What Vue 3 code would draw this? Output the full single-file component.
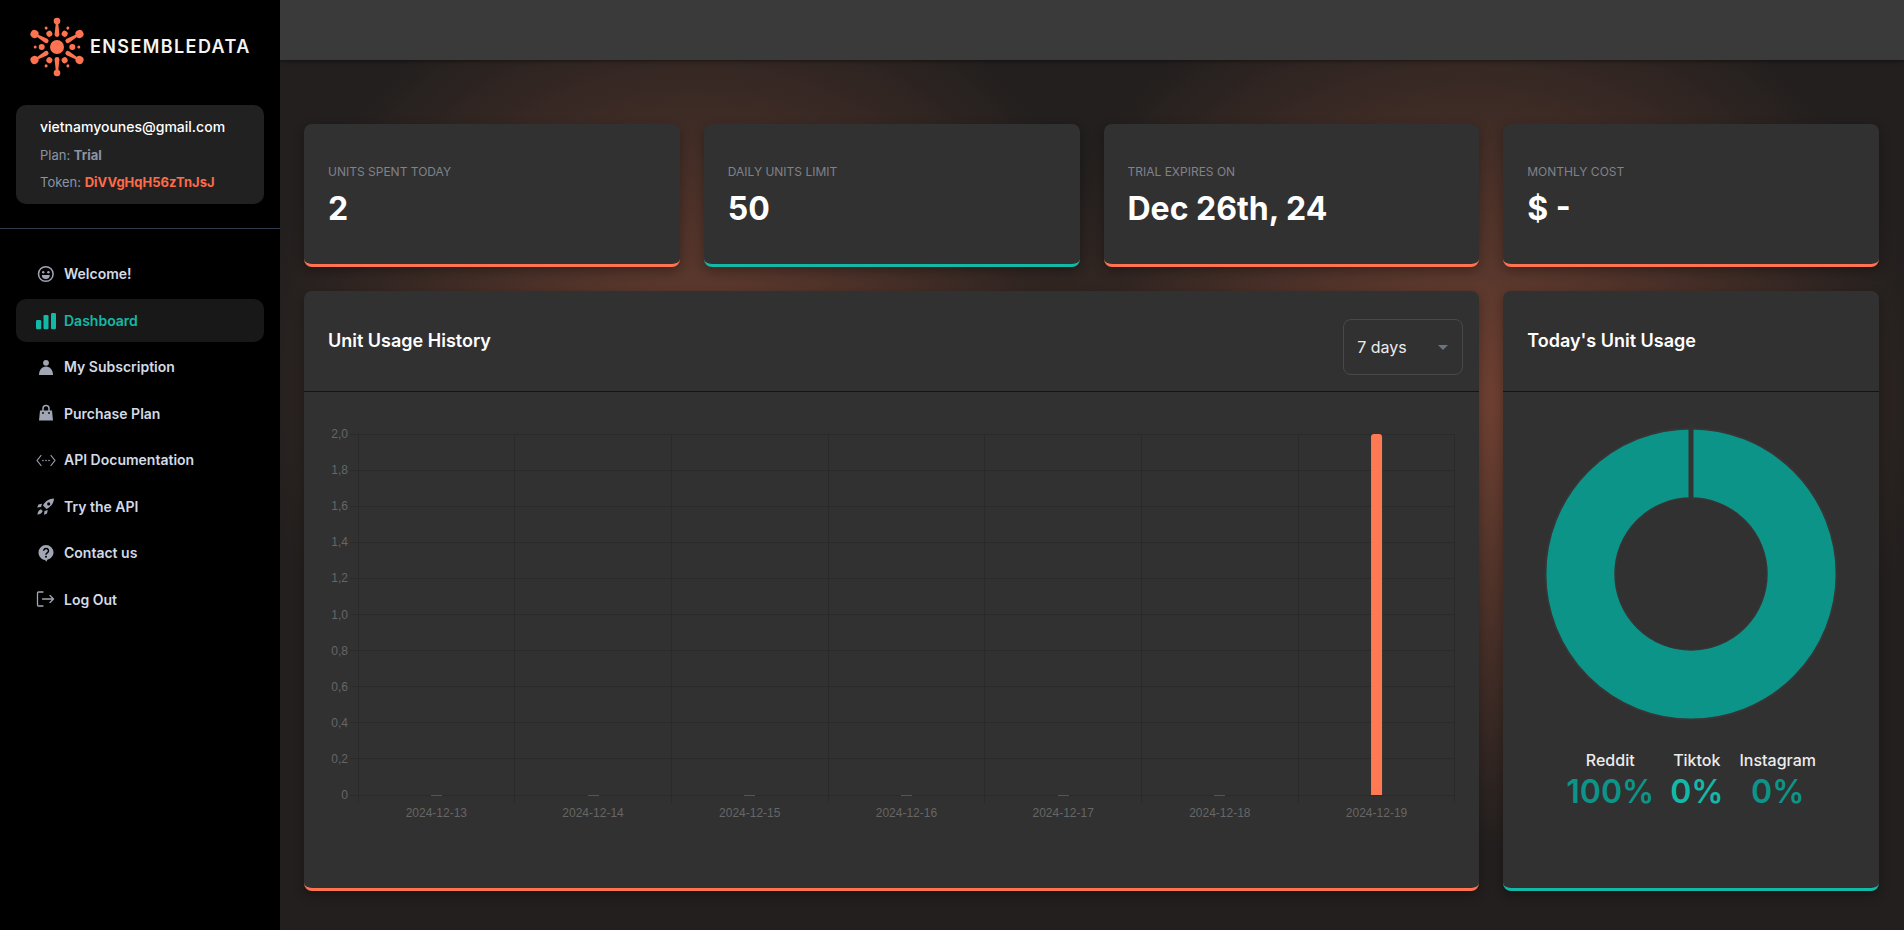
<script setup>
const stats = [
  { label: "UNITS SPENT TODAY", value: "2", accent: "orange" },
  { label: "DAILY UNITS LIMIT", value: "50", accent: "teal" },
  { label: "TRIAL EXPIRES ON", value: "Dec 26th, 24", accent: "orange" },
  { label: "MONTHLY COST", value: "$ -", accent: "orange" },
];

const navItems = ["Welcome!", "Dashboard", "My Subscription", "Purchase Plan", "API Documentation", "Try the API", "Contact us", "Log Out"];

const yLabels = ["2,0", "1,8", "1,6", "1,4", "1,2", "1,0", "0,8", "0,6", "0,4", "0,2", "0"];
const days = ["2024-12-13", "2024-12-14", "2024-12-15", "2024-12-16", "2024-12-17", "2024-12-18", "2024-12-19"];

const chartW = 1175;
const plotL = 54;
const plotT = 42;
const stepX = 156.7;
const stepY = 36.1;
const plotB = plotT + stepY * 10;

const legend = [
  { name: "Reddit", value: "100%" },
  { name: "Tiktok", value: "0%", bright: true },
  { name: "Instagram", value: "0%" },
];

// logo: six long spokes, six mid circles and six small dots between them
const spokes = [0, 60, 120, 180, 240, 300];
const between = [30, 90, 150, 210, 270, 330];
</script>

<template>
  <div class="page">
    <aside class="sidebar">
      <div class="brand">
        <svg class="brand-mark" viewBox="-30 -30 60 60" aria-hidden="true">
          <g fill="#ff7350">
            <circle r="7" />
            <g v-for="a in spokes" :key="a" :transform="`rotate(${a})`">
              <path d="M-1 -26L1 -26L2.4 -12.5a2.4 2.4 0 0 1-4.8 0z" />
              <circle cy="-26" :r="a % 180 === 0 ? 3.3 : 4" />
            </g>
            <g v-for="a in between" :key="'b' + a" :transform="`rotate(${a})`">
              <circle cy="-15.3" r="3" />
              <circle cy="-21.8" r="1.5" />
            </g>
          </g>
        </svg>
        <span class="brand-name">ENSEMBLEDATA</span>
      </div>

      <div class="account">
        <div class="email">vietnamyounes@gmail.com</div>
        <div class="meta">Plan: <b>Trial</b></div>
        <div class="meta">Token: <b class="token">DiVVgHqH56zTnJsJ</b></div>
      </div>

      <div class="divider"></div>

      <nav class="nav">
        <a v-for="(item, i) in navItems" :key="item" class="nav-item" :class="{ active: i === 1 }">
          <span class="nav-icon">
            <svg v-if="i === 0" viewBox="0 0 20 20" fill="#a0a6b3">
              <circle cx="9.8" cy="10" r="7.3" fill="none" stroke="#a0a6b3" stroke-width="1.5" />
              <circle cx="7.2" cy="8.2" r="1.2" />
              <circle cx="12.4" cy="8.2" r="1.2" />
              <path d="M5.8 11h8a4 4 0 0 1-8 0z" />
            </svg>
            <svg v-else-if="i === 1" viewBox="0 0 20 20" fill="#14b8a6">
              <rect x="0" y="10" width="5.2" height="9.3" rx="1.2" />
              <rect x="7.5" y="5" width="5" height="14.3" rx="1.2" />
              <rect x="15" y="3" width="5" height="16.3" rx="1.2" />
            </svg>
            <svg v-else-if="i === 2" viewBox="0 0 20 20" fill="#a0a6b3">
              <circle cx="10" cy="5.8" r="2.9" />
              <path d="M3 18c0-5 3-8.5 7-8.5s7 3.5 7 8.5z" />
            </svg>
            <svg v-else-if="i === 3" viewBox="0 0 20 20" fill="#a0a6b3">
              <path d="M4 7.5h12l1 10H3z" />
              <path d="M7 8V5.5a3 3 0 0 1 6 0V8" fill="none" stroke="#a0a6b3" stroke-width="1.5" />
              <circle cx="7" cy="10" r=".9" fill="#000" />
              <circle cx="13" cy="10" r=".9" fill="#000" />
            </svg>
            <svg v-else-if="i === 4" viewBox="0 0 20 20" fill="#a0a6b3">
              <path d="M5 5.5L1 10.5l4 5M15 5.5l4 5-4 5" fill="none" stroke="#a0a6b3" stroke-width="1.2" stroke-linecap="round" stroke-linejoin="round" />
              <circle cx="7" cy="10.5" r=".8" />
              <circle cx="10" cy="10.5" r=".8" />
              <circle cx="13" cy="10.5" r=".8" />
            </svg>
            <svg v-else-if="i === 5" viewBox="0 0 20 20" fill="#a0a6b3">
              <path fill-rule="evenodd" d="M18 2.5c-5 .2-9 3-11 7l3.5 3.5c4-2 7.3-5.5 7.500-10.500zM12.700 6.300a1.600 1.600 0 1 1 0 3.200 1.600 1.600 0 0 1 0-3.200z" />
              <path d="M6 7.800l-3.500.8-1.300 3 3.800-.5zM11.800 14l-.8 3.500-3 1.300.5-3.800z" />
              <path d="M5 13.200c-2 .5-3.200 2.500-3.600 5.300 2.800-.4 4.800-1.600 5.300-3.600z" />
            </svg>
            <svg v-else-if="i === 6" viewBox="0 0 20 20">
              <path d="M10 2a7.500 7.500 0 0 0-7.500 7.500c0 4 3 7 6.500 7.400l1.500 1.800.8-2c3.400-.8 6.200-3.700 6.200-7.200A7.500 7.500 0 0 0 10 2z" fill="#a0a6b3" />
              <path d="M7.700 7.800a2.400 2.400 0 1 1 3.600 2.100c-.9.5-1.300 1-1.300 1.900" fill="none" stroke="#000" stroke-width="1.500" />
              <circle cx="10" cy="13.700" r="1" fill="#000" />
            </svg>
            <svg v-else viewBox="0 0 20 20" fill="none" stroke="#a0a6b3" stroke-width="1.300" stroke-linecap="round" stroke-linejoin="round">
              <path d="M7 3H2.500a1 1 0 0 0-1 1v12a1 1 0 0 0 1 1H7" />
              <path d="M6.500 10h11M14 6.500l3.500 3.500-3.500 3.500" />
            </svg>
          </span>
          <span>{{ item }}</span>
        </a>
      </nav>
    </aside>

    <div class="main">
      <header class="topbar"></header>

      <section class="content">
        <div class="stats">
          <div v-for="s in stats" :key="s.label" class="card stat" :class="s.accent">
            <div class="stat-label">{{ s.label }}</div>
            <div class="stat-value">{{ s.value }}</div>
          </div>
        </div>

        <div class="panels">
          <div class="card panel orange">
            <div class="panel-head">
              <h3>Unit Usage History</h3>
              <div class="select">
                <span>7 days</span>
                <i class="caret"></i>
              </div>
            </div>
            <svg class="chart" :viewBox="`0 0 ${chartW} 497`" :width="chartW" height="497">
              <g stroke="#2a2a2a" stroke-width="1" shape-rendering="crispEdges">
                <line v-for="(l, n) in yLabels" :key="l" :x1="plotL - 8" :x2="plotL + stepX * 7" :y1="plotT + stepY * n" :y2="plotT + stepY * n" />
                <line v-for="n in 8" :key="n" :x1="plotL + stepX * (n - 1)" :x2="plotL + stepX * (n - 1)" :y1="plotT" :y2="plotB + 8" />
              </g>
              <text v-for="(l, n) in yLabels" :key="'y' + l" class="axis" :x="plotL - 10" :y="plotT + stepY * n + 4" text-anchor="end">{{ l }}</text>
              <text v-for="(d, n) in days" :key="d" class="axis" :x="plotL + stepX * (n + 0.5)" :y="plotB + 22" text-anchor="middle">{{ d }}</text>
              <line v-for="n in 6" :key="'z' + n" :x1="plotL + stepX * (n - 0.5) - 5.5" :x2="plotL + stepX * (n - 0.5) + 5.5" :y1="plotB" :y2="plotB" stroke="#6e4a40" shape-rendering="crispEdges" />
              <path :d="`M${plotL + stepX * 6.5 - 5.5} ${plotB}V${plotT + 3}a3 3 0 0 1 3-3h5a3 3 0 0 1 3 3V${plotB}z`" fill="#ff7a52" />
            </svg>
          </div>

          <div class="card panel teal">
            <div class="panel-head">
              <h3>Today's Unit Usage</h3>
            </div>
            <div class="donut-wrap">
              <svg class="donut" viewBox="0 0 300 300" width="300" height="300">
                <circle cx="150" cy="150" r="145.5" fill="none" stroke="#363636" stroke-width="2" />
                <circle cx="150" cy="150" r="110.3" fill="none" stroke="#0d9488" stroke-width="68.6" />
                <circle cx="150" cy="150" r="76" fill="none" stroke="#363636" stroke-width="1.5" />
                <rect x="147.5" y="0" width="5" height="74" fill="#333" />
              </svg>
            </div>
            <div class="legend">
              <div v-for="l in legend" :key="l.name" class="legend-item">
                <div class="legend-name">{{ l.name }}</div>
                <div class="legend-value" :class="{ bright: l.bright }">{{ l.value }}</div>
              </div>
            </div>
          </div>
        </div>
      </section>
    </div>
  </div>
</template>

<style>
html,
body {
  margin: 0;
  background: #000;
}
</style>

<style scoped>
.page {
  display: flex;
  width: 1904px;
  height: 930px;
  overflow: hidden;
  font-family: Inter, "Liberation Sans", sans-serif;
  color: #fff;
}

.sidebar {
  width: 280px;
  flex: none;
  background: #000;
  display: flex;
  flex-direction: column;
}

.brand {
  height: 105px;
  box-sizing: border-box;
  padding: 17px 0 0 27px;
  display: flex;
  align-items: flex-start;
}

.brand-mark {
  width: 60px;
  height: 60px;
  flex: none;
}

.brand-name {
  margin: 20px 0 0 3px;
  font-size: 18px;
  line-height: 20px;
  font-weight: 600;
  letter-spacing: 1.4px;
  white-space: nowrap;
  color: #f4f4f4;
}

.account {
  margin: 0 16px;
  height: 99px;
  box-sizing: border-box;
  padding: 12px 24px;
  background: #212121;
  border-radius: 10px;
}

.email {
  font-size: 14px;
  font-weight: 500;
  line-height: 20px;
  margin-bottom: 8px;
}

.meta {
  font-size: 13px;
  line-height: 20px;
  margin-bottom: 7px;
  color: #8a94a6;
}

.meta b {
  font-weight: 700;
}

.meta .token {
  color: #ff6a48;
}

.divider {
  height: 1px;
  margin-top: 24px;
  background: #2f3a4f;
}

.nav {
  margin-top: 23px;
  padding: 0 16px;
  display: flex;
  flex-direction: column;
  gap: 3.5px;
}

.nav-item {
  height: 43px;
  display: flex;
  align-items: center;
  gap: 8px;
  padding-left: 20px;
  border-radius: 10px;
  font-size: 14px;
  font-weight: 600;
  color: #d3dae6;
}

.nav-item.active {
  background: #181818;
  color: #14b8a6;
}

.nav-icon {
  width: 20px;
  height: 20px;
  flex: none;
  display: flex;
}

.nav-icon svg {
  width: 20px;
  height: 20px;
  overflow: visible;
}

.main {
  flex: 1;
  min-width: 0;
  display: flex;
  flex-direction: column;
  background:
    radial-gradient(ellipse 440px 440px at 415px 390px, rgba(112, 65, 50, 0.95), rgba(112, 65, 50, 0) 100%),
    radial-gradient(ellipse 460px 450px at 1190px 400px, rgba(112, 65, 50, 1), rgba(112, 65, 50, 0) 100%),
    #221f1e;
}

.topbar {
  height: 60px;
  flex: none;
  background: #3a3a3a;
  box-shadow: 0 1px 4px rgba(0, 0, 0, 0.5);
}

.content {
  padding: 64px 24px 0;
  display: flex;
  flex-direction: column;
  gap: 24px;
}

.stats {
  display: grid;
  grid-template-columns: repeat(4, 375.75px);
  gap: 24px;
}

.card {
  background: #313131;
  border-radius: 8px;
  box-sizing: border-box;
  border-bottom: 3px solid transparent;
  box-shadow: 0 4px 12px rgba(0, 0, 0, 0.3);
}

.card.orange {
  border-bottom-color: #ff7350;
}

.card.teal {
  border-bottom-color: #14b8a6;
}

.stat {
  height: 143px;
  padding: 39px 24px 0;
}

.stat-label {
  font-size: 12px;
  line-height: 18px;
  color: #80828a;
}

.stat-value {
  margin-top: 8px;
  font-size: 32px;
  line-height: 40px;
  font-weight: 700;
}

.panels {
  display: grid;
  grid-template-columns: 1175.25px 375.75px;
  gap: 24px;
}

.panel {
  height: 600px;
}

.panel-head {
  height: 101px;
  box-sizing: border-box;
  padding: 0 16px 0 24px;
  display: flex;
  align-items: center;
  justify-content: space-between;
  border-bottom: 1px solid #141414;
}

.panel-head h3 {
  margin: 0;
  font-size: 18px;
  line-height: 28px;
  font-weight: 600;
}

.select {
  width: 120px;
  height: 56px;
  box-sizing: border-box;
  margin-top: 12px;
  padding: 0 14px 0 13px;
  display: flex;
  align-items: center;
  justify-content: space-between;
  border: 1px solid #494949;
  border-radius: 8px;
  font-size: 16px;
  color: #ececec;
}

.caret {
  width: 0;
  height: 0;
  border-left: 5px solid transparent;
  border-right: 5px solid transparent;
  border-top: 5px solid #6b7280;
}

.chart {
  display: block;
}

.axis {
  font-family: "Liberation Sans", Arial, sans-serif;
  font-size: 12px;
  fill: #666;
}

.donut-wrap {
  display: flex;
  justify-content: center;
  padding-top: 32px;
}

.legend {
  margin-top: 24px;
  display: flex;
  justify-content: center;
  gap: 16px;
}

.legend-item {
  text-align: center;
}

.legend-name {
  font-size: 16px;
  line-height: 24px;
  font-weight: 500;
  color: #ececec;
}

.legend-value {
  font-size: 32px;
  line-height: 40px;
  font-weight: 600;
  color: #0d9488;
}

.legend-value.bright {
  color: #14b8a6;
}
</style>
